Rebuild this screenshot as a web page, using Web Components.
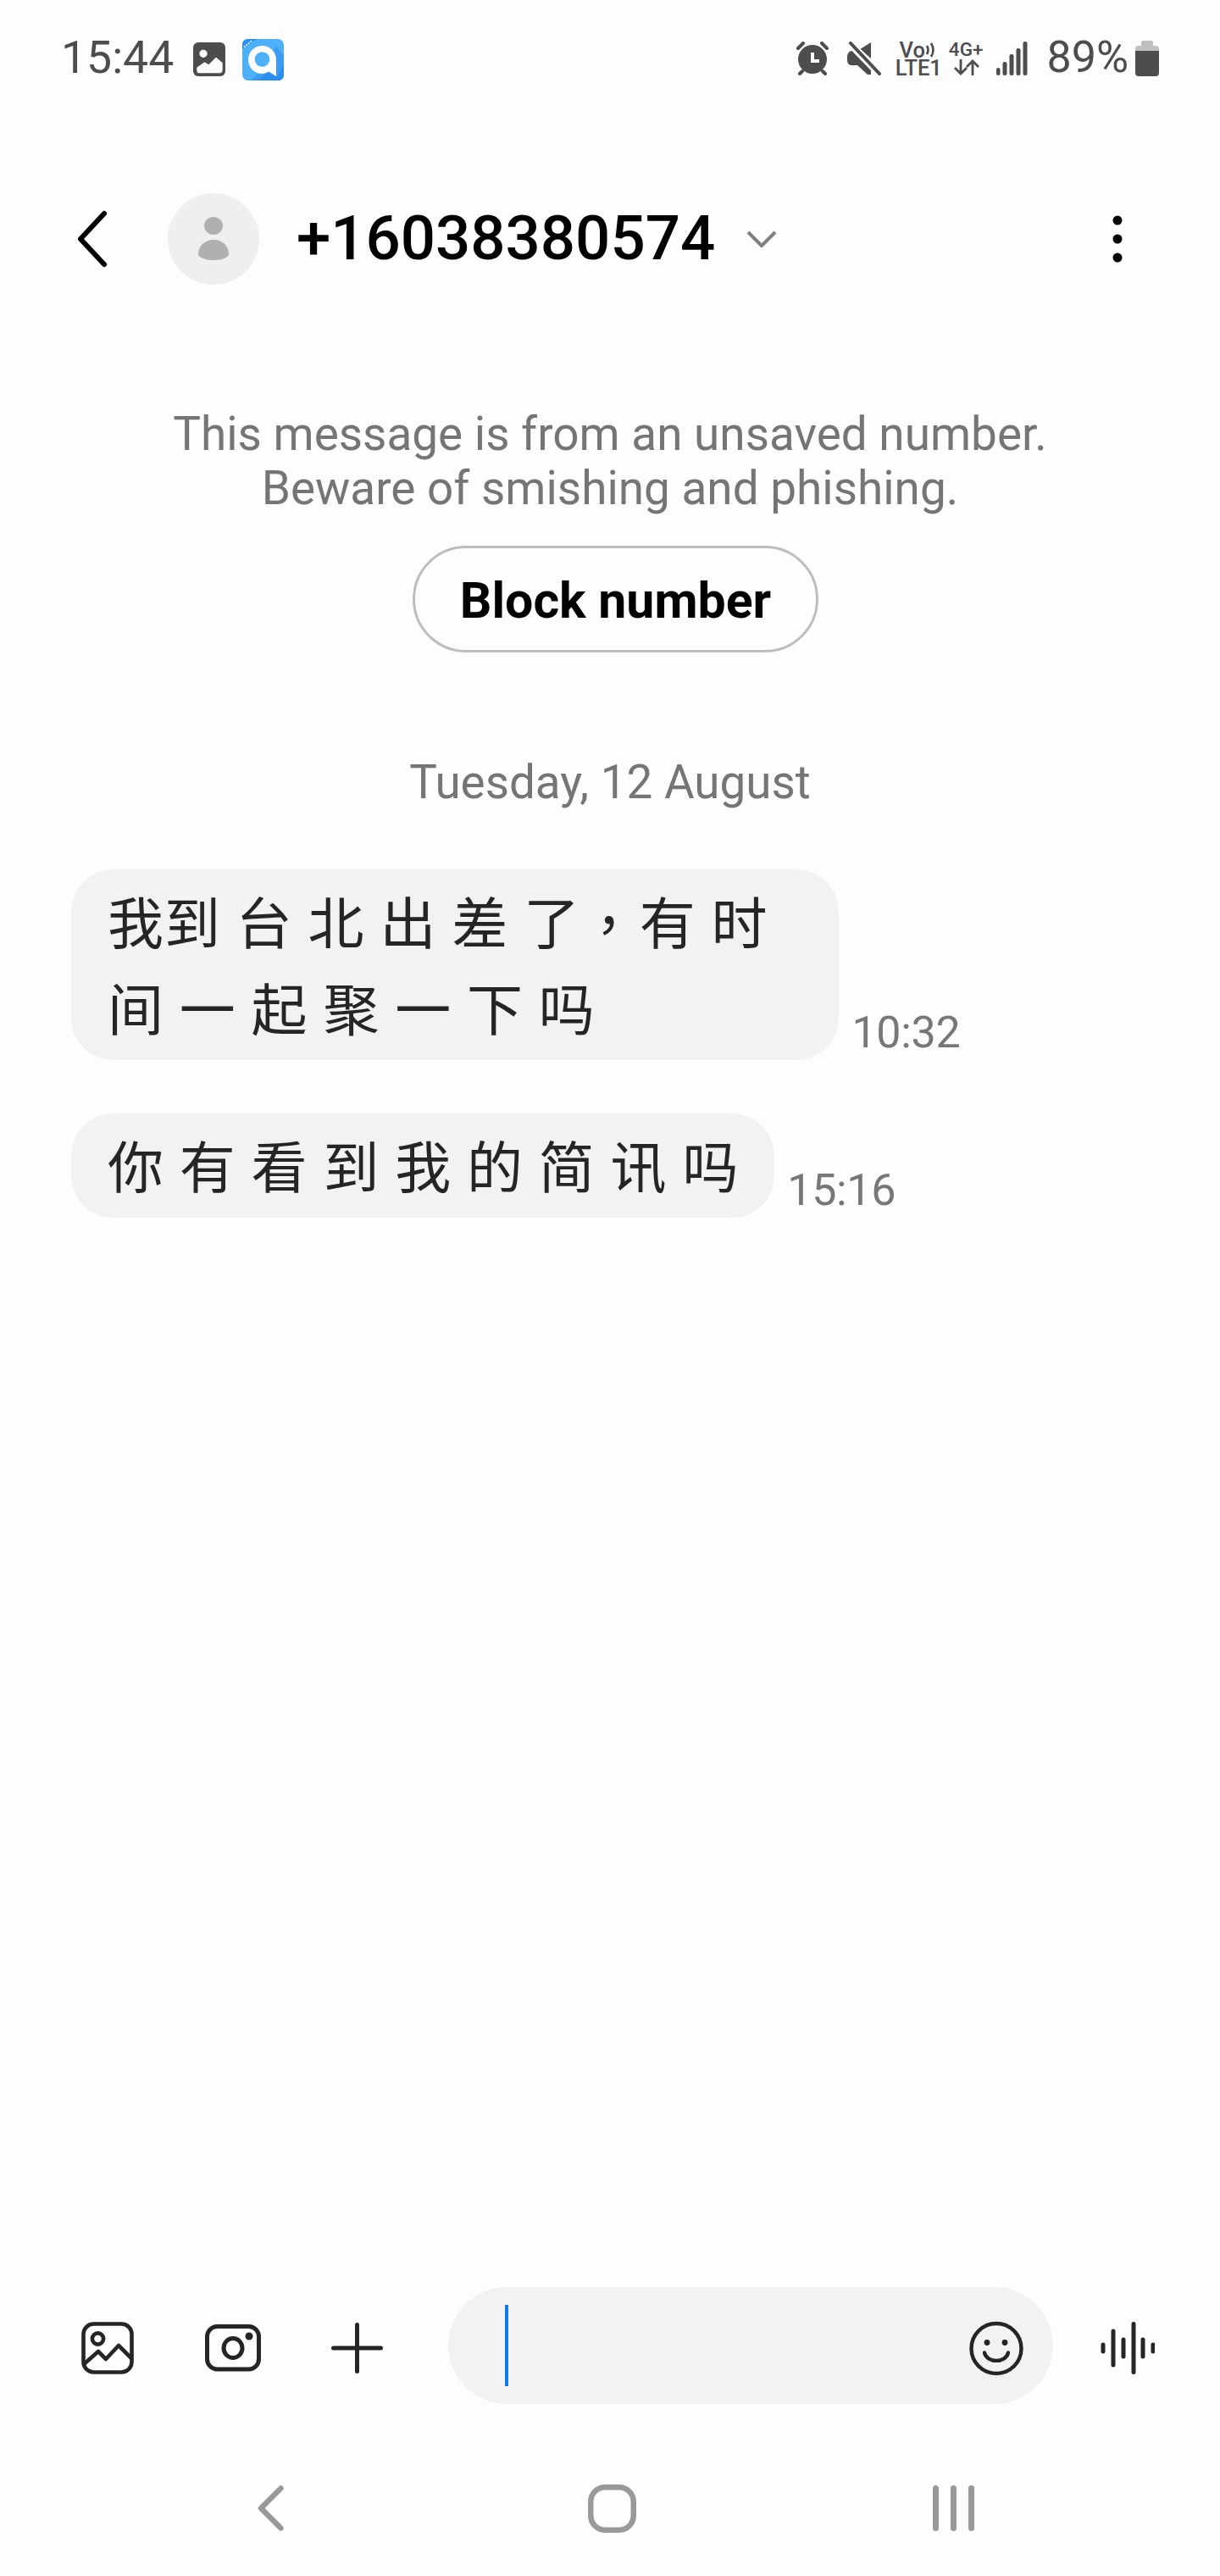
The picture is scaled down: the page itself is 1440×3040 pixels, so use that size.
<!DOCTYPE html>
<html lang="en">
<head>
<meta charset="utf-8">
<title>Messages</title>
<style>
  html, body { margin: 0; padding: 0; }
  body {
    width: 1440px;
    height: 3040px;
    display: flex;
    flex-direction: column;
    background: #fdfdfd;
    font-family: Roboto, "Liberation Sans", "Noto Sans CJK SC", sans-serif;
    overflow: hidden;
  }
  main-thread { flex: 1; }
</style>
</head>
<body>
<status-bar></status-bar>
<convo-header number="+16038380574"></convo-header>
<main-thread>
  <unsaved-notice>
    <span slot="l1">This message is from an unsaved number.</span>
    <span slot="l2">Beware of smishing and phishing.</span>
    <span slot="action">Block number</span>
  </unsaved-notice>
  <date-line>Tuesday, 12 August</date-line>
  <msg-bubble pad="66">
    <span class="tight">我</span>到台北出差<span class="tail">了</span><span class="comma">，</span>有时<br>间一起聚一下吗
    <span slot="time">10:32</span>
  </msg-bubble>
  <msg-bubble pad="24" class="next">
    你有看到我的简讯吗
    <span slot="time">15:16</span>
  </msg-bubble>
</main-thread>
<msg-composer></msg-composer>
<nav-bar></nav-bar>

<script>
class StatusBar extends HTMLElement {
  constructor() {
    super();
    this.attachShadow({ mode: "open" });
  }
  connectedCallback() {
    this.shadowRoot.innerHTML = `
    <style>
      :host {
        display: flex;
        align-items: center;
        height: 140px;
        padding: 0 72px 0 72px;
        box-sizing: border-box;
        color: #4d4d4d;
        font-family: Roboto, sans-serif;
      }
      .clock, .pct { font-size: 53.5px; line-height: 60px; margin-bottom: 5px; }
      .pct { font-size: 52px; }
      svg { display: block; flex: none; }
      .small { font-size: 25.5px; font-weight: 500; white-space: nowrap; }
      .small span { display: block; line-height: 19px; height: 19px; }
      .stack { display: flex; flex-direction: column; align-items: center; }
      .right { margin-left: auto; display: flex; align-items: center; margin-bottom: 3px; }
      .right .pct { margin-bottom: 2px; }
      .vo { display: flex; align-items: center; height: 23px; }
    </style>
    <span class="clock">15:44</span>
    <svg style="margin-left:23px" width="38" height="40" viewBox="0 0 38 40">
      <rect width="38" height="40" rx="6" fill="#4d4d4d"/>
      <circle cx="12" cy="13.3" r="4.6" fill="#fdfdfd"/>
      <path d="M5 30 L13.5 24 L18.5 27 L27 18.5 L34 24.5 V32 Q34 35.5 31 35.5 H7.5 Q5 35.5 5 33 Z" fill="#fdfdfd" stroke="#fdfdfd" stroke-width="1.4" stroke-linejoin="round"/>
    </svg>
    <svg style="margin-left:20px" width="49" height="49" viewBox="0 0 49 49">
      <rect width="49" height="49" rx="7" fill="#4fb0fa"/>
      <path d="M9 49 L22 38 L40 8 L49 20 V42 Q49 49 42 49 Z" fill="#2a8df0" opacity=".55"/>
      <path d="M20 49 L30 38 L42 44 L49 30 V42 Q49 49 42 49 Z" fill="#2a8df0"/>
      <path d="M0 12 V7 Q0 0 7 0 H17 Z" fill="#2a8df0"/>
      <path d="M2 9.5 L12 1.5" stroke="#d8eefe" stroke-width="1.8" stroke-dasharray="2 1.2"/>
      <path d="M23.5 8 C32.5 8 40 15 40 24.5 V44 L31 38.5 C29 40 26.5 41 23.5 41 C14 41 7 33.5 7 24.5 C7 15 14.5 8 23.5 8 Z" fill="#fff"/>
      <circle cx="23.5" cy="24" r="8.8" fill="#4fb0fa"/>
    </svg>

    <div class="right">
      <svg width="40" height="40" viewBox="0 0 40 40">
        <circle cx="20" cy="21" r="17" fill="#4d4d4d"/>
        <path d="M3 8 L9 2 M37 8 L31 2 M5 38 L8 35 M35 38 L32 35" stroke="#4d4d4d" stroke-width="4" stroke-linecap="round"/>
        <path d="M20 13 V23 H28" fill="none" stroke="#fdfdfd" stroke-width="4"/>
      </svg>
      <svg style="margin-left:21px" width="40" height="40" viewBox="0 0 40 40">
        <path d="M15 9 L28 1 V20 Z M0 19 Q0 11 6 11 H9 L28 30 V39 H24 L12 28 H6 Q0 28 0 22 Z" fill="#4d4d4d"/>
        <path d="M3 2 L38 38" stroke="#fdfdfd" stroke-width="9"/>
        <path d="M4 2 L38 38" stroke="#4d4d4d" stroke-width="4" stroke-linecap="round"/>
      </svg>
      <div class="stack small" style="margin-left:17px">
        <div class="vo"><span>Vo</span>
          <svg width="15" height="20" viewBox="0 0 15 20"><path d="M2 5 Q5 10 2 15 M7 2 Q12 10 7 18" fill="none" stroke="#4d4d4d" stroke-width="2.6"/></svg>
        </div>
        <span>LTE1</span>
      </div>
      <div class="stack" style="margin-left:8px;font-size:22.5px;line-height:19px;font-weight:500">
        <span style="height:21px">4G+</span>
        <svg width="32" height="19" viewBox="0 0 32 19">
          <path d="M10 0 V17 M3 10 L10 17 L17 10 M24 19 V2 M17 9 L24 2 L31 9" fill="none" stroke="#4d4d4d" stroke-width="2.8"/>
        </svg>
      </div>
      <svg style="margin-left:16px" width="37" height="40" viewBox="0 0 37 40" fill="#4d4d4d">
        <rect x="0" y="31" width="4.5" height="9" rx="2.2"/>
        <rect x="7.5" y="24" width="5" height="16" rx="2.2"/>
        <rect x="15.5" y="15" width="5" height="25" rx="2.2"/>
        <rect x="23.5" y="8" width="5" height="32" rx="2.2"/>
        <rect x="31.5" y="0" width="5" height="40" rx="2.2"/>
      </svg>
      <span class="pct" style="margin-left:22px">89%</span>
      <svg style="margin-left:8px" width="28" height="42" viewBox="0 0 28 42">
        <path d="M7 6 V2 Q7 0 9 0 H19 Q21 0 21 2 V6 H24 Q28 6 28 10 V13 H0 V10 Q0 6 4 6 Z" fill="#c0c0c0"/>
        <path d="M0 12 H28 V38 Q28 42 24 42 H4 Q0 42 0 38 Z" fill="#4d4d4d"/>
      </svg>
    </div>
    `;
  }
}

class ConvoHeader extends HTMLElement {
  constructor() {
    super();
    this.attachShadow({ mode: "open" });
  }
  connectedCallback() {
    this.shadowRoot.innerHTML = `
    <style>
      :host {
        display: flex;
        align-items: center;
        height: 284px;
        padding: 0 115px 0 90px;
        box-sizing: border-box;
        font-family: Roboto, sans-serif;
        color: #000;
      }
      svg { display: block; flex: none; }
      .avatar {
        width: 108px;
        height: 108px;
        border-radius: 50%;
        background: #efefef;
        margin-left: 71px;
        display: flex;
        align-items: center;
        justify-content: center;
        flex: none;
      }
      .num { font-size: 72.6px; font-weight: 500; margin-left: 44px; line-height: 90px; white-space: nowrap; }
      .menu { margin-left: auto; }
    </style>
    <svg width="37" height="68" viewBox="0 0 37 68">
      <path d="M33 4 L5 34 L33 64" fill="none" stroke="#000" stroke-width="6" stroke-linecap="round" stroke-linejoin="round"/>
    </svg>
    <div class="avatar">
      <svg width="36" height="52" viewBox="0 0 36 52" fill="#b0b0b0">
        <ellipse cx="18" cy="10.5" rx="11" ry="10.5"/>
        <path d="M0 45 V44 C0 34 8 27 18 27 C28 27 36 34 36 44 V45 C30 53 6 53 0 45 Z"/>
      </svg>
    </div>
    <span class="num">${this.getAttribute("number")}</span>
    <svg style="margin-left:37px" width="36" height="20" viewBox="0 0 36 20">
      <path d="M2 2 L18 18 L34 2" fill="none" stroke="#808080" stroke-width="4"/>
    </svg>
    <svg class="menu" width="12" height="56" viewBox="0 0 12 56" fill="#000">
      <circle cx="6" cy="6" r="5.5"/><circle cx="6" cy="28" r="5.5"/><circle cx="6" cy="50" r="5.5"/>
    </svg>
    `;
  }
}

class UnsavedNotice extends HTMLElement {
  constructor() {
    super();
    this.attachShadow({ mode: "open" });
  }
  connectedCallback() {
    this.shadowRoot.innerHTML = `
    <style>
      :host {
        display: flex;
        flex-direction: column;
        align-items: center;
        margin-top: 56px;
        font-family: Roboto, sans-serif;
      }
      .line { font-size: 54.9px; line-height: 64px; color: #757575; white-space: nowrap; }
      .btn {
        margin: 36px 0 0 13px;
        width: 479px;
        height: 126px;
        box-sizing: border-box;
        border: 3.5px solid #bdbdbd;
        border-radius: 63px;
        padding-top: 3px;
        display: flex;
        align-items: center;
        justify-content: center;
        font-size: 59px;
        font-weight: 700;
        color: #000;
      }
    </style>
    <div class="line"><slot name="l1"></slot></div>
    <div class="line"><slot name="l2"></slot></div>
    <div class="btn"><slot name="action"></slot></div>
    `;
  }
}

class DateLine extends HTMLElement {
  constructor() {
    super();
    this.attachShadow({ mode: "open" });
  }
  connectedCallback() {
    this.shadowRoot.innerHTML = `
    <style>
      :host {
        display: block;
        margin-top: 121px;
        text-align: center;
        font: 54.8px/64px Roboto, sans-serif;
        color: #757575;
      }
    </style>
    <slot></slot>
    `;
  }
}

class MsgBubble extends HTMLElement {
  constructor() {
    super();
    this.attachShadow({ mode: "open" });
  }
  connectedCallback() {
    const pad = this.getAttribute("pad") || "18";
    this.shadowRoot.innerHTML = `
    <style>
      :host {
        display: flex;
        align-items: flex-end;
        margin: 71px 0 0 84px;
      }
      :host(.next) { margin-top: 63px; }
      .bubble {
        background: #f2f2f2;
        border-radius: 50px;
        padding: 7.5px ${pad}px 13.5px 43px;
        font: 66px/102px "Noto Sans CJK SC", sans-serif;
        letter-spacing: 18.8px;
        color: #252525;
        white-space: nowrap;
      }
      ::slotted(.tight) { letter-spacing: 1px; }
      ::slotted(.comma) { letter-spacing: -14px; vertical-align: 18px; line-height: 1; }
      .time {
        margin: 0 0 2px 15px;
        font: 52px/60px Roboto, sans-serif;
        color: #777;
        letter-spacing: -0.3px;
      }
    </style>
    <div class="bubble"><slot></slot></div>
    <div class="time"><slot name="time"></slot></div>
    `;
  }
}

class MsgComposer extends HTMLElement {
  constructor() {
    super();
    this.attachShadow({ mode: "open" });
  }
  connectedCallback() {
    this.shadowRoot.innerHTML = `
    <style>
      :host {
        display: flex;
        align-items: center;
        height: 138px;
        margin-bottom: 43px;
        padding-left: 96px;
      }
      svg { display: block; flex: none; margin-top: 6px; }
      .field {
        width: 714px;
        height: 138px;
        margin-left: 77px;
        box-sizing: border-box;
        padding: 0 35px 0 67px;
        background: #f2f2f2;
        border-radius: 69px;
        display: flex;
        align-items: center;
        justify-content: space-between;
        flex: none;
      }
      .caret { width: 4px; height: 96px; background: #0f7bf0; }
    </style>
    <svg width="62" height="62" viewBox="0 0 62 62" fill="none" stroke="#252525" stroke-width="4.6" stroke-linecap="round" stroke-linejoin="round">
      <rect x="2.5" y="2.5" width="57" height="57" rx="12"/>
      <circle cx="19.5" cy="20" r="6.6"/>
      <path d="M3 50 L20 35 L29 44 L44 28 L59 43"/>
    </svg>
    <svg style="margin-left:84px" width="66" height="56" viewBox="0 0 66 56" fill="none" stroke="#252525" stroke-width="5">
      <rect x="2.5" y="2.5" width="61" height="50.5" rx="12"/>
      <ellipse cx="33" cy="28" rx="11" ry="11.5"/>
      <circle cx="52" cy="14" r="4.5" fill="#252525" stroke="none"/>
    </svg>
    <svg style="margin-left:83px" width="61" height="60" viewBox="0 0 61 60" fill="none" stroke="#252525" stroke-width="5" stroke-linecap="round">
      <path d="M30.5 2.5 V57.5 M2.5 30 H58.5"/>
    </svg>
    <div class="field">
      <div class="caret"></div>
      <svg width="64" height="65" viewBox="0 0 64 65" fill="none" stroke="#252525" stroke-width="4.4" stroke-linecap="round">
        <circle cx="32" cy="32.5" r="29.5"/>
        <circle cx="21" cy="25.5" r="3.4" fill="#252525" stroke="none"/>
        <circle cx="42" cy="25.5" r="3.4" fill="#252525" stroke="none"/>
        <path d="M18 37.5 C21 50 43 50 46 37.5"/>
      </svg>
    </div>
    <svg style="margin-left:56px" width="64" height="62" viewBox="0 0 64 62" fill="none" stroke="#252525" stroke-width="5" stroke-linecap="round">
      <path d="M3 27 V35 M15 11 V51 M27 21 V41 M39 2.5 V59.5 M50 21 V41 M62 27 V35"/>
    </svg>
    `;
  }
}

class NavBar extends HTMLElement {
  constructor() {
    super();
    this.attachShadow({ mode: "open" });
  }
  connectedCallback() {
    this.shadowRoot.innerHTML = `
    <style>
      :host {
        display: flex;
        align-items: center;
        height: 160px;
        padding-left: 304px;
      }
      svg { display: block; flex: none; }
    </style>
    <svg width="31" height="54" viewBox="0 0 31 54" fill="none" stroke="#999" stroke-width="6.5" stroke-linecap="round" stroke-linejoin="round">
      <path d="M27.5 3.5 L4 27 L27.5 50.5"/>
    </svg>
    <svg style="margin-left:359px" width="57" height="57" viewBox="0 0 57 57" fill="none" stroke="#999" stroke-width="6.5">
      <rect x="3.25" y="3.25" width="50.5" height="50.5" rx="17"/>
    </svg>
    <svg style="margin-left:350px" width="49" height="54" viewBox="0 0 49 54" fill="#999">
      <rect x="0" width="7" height="54" rx="3.5"/>
      <rect x="21" width="7" height="54" rx="3.5"/>
      <rect x="42" width="7" height="54" rx="3.5"/>
    </svg>
    `;
  }
}

customElements.define("status-bar", StatusBar);
customElements.define("convo-header", ConvoHeader);
customElements.define("unsaved-notice", UnsavedNotice);
customElements.define("date-line", DateLine);
customElements.define("msg-bubble", MsgBubble);
customElements.define("msg-composer", MsgComposer);
customElements.define("nav-bar", NavBar);
</script>
</body>
</html>
